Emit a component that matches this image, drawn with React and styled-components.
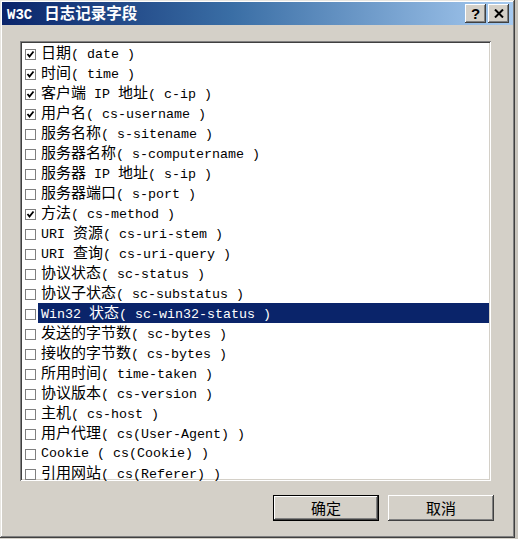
import React from "react";
import styled, { createGlobalStyle } from "styled-components";

const GlobalStyle = createGlobalStyle`
  html, body {
    margin: 0;
    padding: 0;
    background: #d4d0c8;
    overflow: hidden;
  }
`;

const fields = [
  { label: "日期( date )", checked: true },
  { label: "时间( time )", checked: true },
  { label: "客户端 IP 地址( c-ip )", checked: true },
  { label: "用户名( cs-username )", checked: true },
  { label: "服务名称( s-sitename )" },
  { label: "服务器名称( s-computername )" },
  { label: "服务器 IP 地址( s-ip )" },
  { label: "服务器端口( s-port )" },
  { label: "方法( cs-method )", checked: true },
  { label: "URI 资源( cs-uri-stem )" },
  { label: "URI 查询( cs-uri-query )" },
  { label: "协议状态( sc-status )" },
  { label: "协议子状态( sc-substatus )" },
  { label: "Win32 状态( sc-win32-status )", selected: true },
  { label: "发送的字节数( sc-bytes )" },
  { label: "接收的字节数( cs-bytes )" },
  { label: "所用时间( time-taken )" },
  { label: "协议版本( cs-version )" },
  { label: "主机( cs-host )" },
  { label: "用户代理( cs(User-Agent) )" },
  { label: "Cookie ( cs(Cookie) )" },
  { label: "引用网站( cs(Referer) )" },
];

// splits a label into CJK runs and half-width runs so both get the right width
const MixedText = ({ text }) => {
  const parts = text.split(/([\u3000-\u9fff\uff00-\uffef]+)/).filter(Boolean);
  return parts.map((p, i) =>
    /[\u3000-\u9fff\uff00-\uffef]/.test(p) ? (
      <Wide key={i}>{p}</Wide>
    ) : (
      <Narrow key={i}>{p}</Narrow>
    )
  );
};

const App = () => {
  return (
    <Desktop>
      <GlobalStyle />
      <Dialog>
        <TitleBar>
          <TitleText>
            <TitleLatin>W3C</TitleLatin>
            <TitleCjk>日志记录字段</TitleCjk>
          </TitleText>
          <TitleButtons>
            <TitleButton>
              <QuestionMark>?</QuestionMark>
            </TitleButton>
            <TitleButton>
              <svg width="10" height="9" viewBox="0 0 10 9">
                <path d="M1 0.5 L9 8.5 M9 0.5 L1 8.5" stroke="#000" strokeWidth="2" />
              </svg>
            </TitleButton>
          </TitleButtons>
        </TitleBar>
        <Body>
          <FieldList>
            {fields.map((f) => (
              <Row key={f.label}>
                <CheckBox>
                  {f.checked && (
                    <svg width="9" height="9" viewBox="0 0 9 9">
                      <path d="M1.5 4 L3.5 6.5 L7.5 1.5" stroke="#000" strokeWidth="1.8" fill="none" />
                    </svg>
                  )}
                </CheckBox>
                <RowLabel selected={f.selected}>
                  <MixedText text={f.label} />
                </RowLabel>
              </Row>
            ))}
          </FieldList>
          <ButtonRow>
            <Button isDefault>
              <Wide>确定</Wide>
            </Button>
            <Button>
              <Wide>取消</Wide>
            </Button>
          </ButtonRow>
        </Body>
      </Dialog>
    </Desktop>
  );
};

const Desktop = styled.div`
  width: 518px;
  height: 539px;
  background: #d4d0c8;
  box-shadow: inset -3px 0 #c8c4bc;
`;

const Dialog = styled.div`
  width: 515px;
  height: 538px;
  box-sizing: border-box;
  padding: 2px;
  background: #d4d0c8;
  box-shadow: inset -1px -1px #404040, inset 1px 1px #e8e6e1, inset -2px -2px #808080,
    inset 2px 2px #ffffff;
  display: flex;
  flex-direction: column;
`;

const TitleBar = styled.div`
  height: 23px;
  display: flex;
  align-items: center;
  justify-content: space-between;
  padding: 0 4px 0 5px;
  background: linear-gradient(to right, #0a246a 0%, #3a6ea5 45%, #a6caf0 100%);
`;

const TitleText = styled.div`
  color: #fff;
  font-weight: bold;
  line-height: 23px;
  white-space: pre;
`;

const TitleLatin = styled.span`
  font-family: "Liberation Mono", monospace;
  font-size: 14px;
  margin-right: 12px;
`;

const TitleCjk = styled.span`
  font-family: "Noto Sans CJK SC", sans-serif;
  font-size: 15.5px;
`;

const TitleButtons = styled.div`
  display: flex;
  gap: 2px;
`;

const TitleButton = styled.div`
  width: 21px;
  height: 19px;
  box-sizing: border-box;
  background: #d4d0c8;
  box-shadow: inset -1px -1px #404040, inset 1px 1px #ffffff, inset -2px -2px #808080,
    inset 2px 2px #d4d0c8;
  display: flex;
  align-items: center;
  justify-content: center;
`;

const QuestionMark = styled.span`
  font-family: "Liberation Sans", Arial, sans-serif;
  font-weight: bold;
  font-size: 15px;
  line-height: 15px;
  color: #000;
`;

const Body = styled.div`
  flex: 1;
  display: flex;
  flex-direction: column;
  padding: 16px 0 0 18px;
`;

const FieldList = styled.div`
  width: 471px;
  height: 440px;
  box-sizing: border-box;
  padding: 2px;
  background: #fff;
  overflow: hidden;
  box-shadow: inset 1px 1px #808080, inset -1px -1px #ffffff, inset 2px 2px #404040,
    inset -2px -2px #d4d0c8;
`;

const Row = styled.div`
  height: 20px;
  display: flex;
  align-items: center;
`;

const CheckBox = styled.div`
  width: 11px;
  height: 11px;
  box-sizing: border-box;
  margin: 3px 2px 0 3px;
  border: 1px solid #808080;
  background: #fff;
  display: flex;
  align-items: center;
  justify-content: center;
`;

const RowLabel = styled.div`
  flex: 1;
  height: 20px;
  box-sizing: border-box;
  padding: 1px 0 0 3px;
  line-height: 16px;
  white-space: pre;
  color: ${(p) => (p.selected ? "#ffffff" : "#000000")};
  background: ${(p) => (p.selected ? "#0a246a" : "transparent")};
`;

const Wide = styled.span`
  font-family: "Noto Sans CJK SC", sans-serif;
  font-size: 15px;
  line-height: 16px;
`;

const Narrow = styled.span`
  font-family: "Liberation Mono", monospace;
  font-size: 13.33px;
  line-height: 16px;
  white-space: pre;
`;

const ButtonRow = styled.div`
  display: flex;
  justify-content: flex-end;
  gap: 9px;
  margin-top: 14px;
  padding-right: 19px;
`;

const Button = styled.div`
  width: 106px;
  height: 26px;
  box-sizing: border-box;
  display: flex;
  align-items: center;
  justify-content: center;
  color: #000;
  background: #d4d0c8;
  box-shadow: ${(p) =>
    p.isDefault
      ? "inset 0 0 0 1px #000, inset -2px -2px #404040, inset 2px 2px #ffffff, inset -3px -3px #808080"
      : "inset -1px -1px #404040, inset 1px 1px #ffffff, inset -2px -2px #808080, inset 2px 2px #d4d0c8"};
`;

export default App;
